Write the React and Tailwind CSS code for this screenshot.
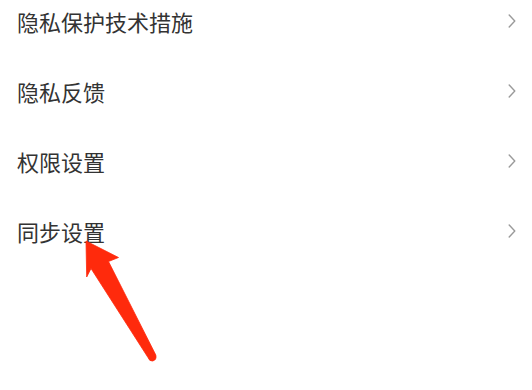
import React from 'react';

const items = ['隐私保护技术措施', '隐私反馈', '权限设置', '同步设置'];

function Chevron() {
  return (
    <svg width="8" height="14" viewBox="0 0 8 14" fill="none">
      <polyline points="1.2,1 6.8,7 1.2,13" stroke="#9a9a9a" strokeWidth="1.4" strokeLinecap="round" strokeLinejoin="round" />
    </svg>
  );
}

export default function App() {
  return (
    <div className="relative w-[532px] h-[390px] overflow-hidden bg-white" style={{ fontFamily: '"Noto Sans CJK SC", "Noto Sans", sans-serif' }}>
      <div className="-mt-[14px]">
        {items.map((t) => (
          <div key={t} className="flex h-[70px] items-center justify-between pl-[17px] pr-[16px]">
            <span className="text-[22px] text-[#333333]">{t}</span>
            <Chevron />
          </div>
        ))}
      </div>

      {/* annotation arrow */}
      <svg className="absolute left-0 top-0 pointer-events-none" width="532" height="390" viewBox="0 0 532 390">
        <path
          d="M86 241 L118.5 257.5 L108.5 261.5 L155.8 355 Q157 360 152.5 361 Q149.5 361.5 148 357.5 L91 268.5 L86.7 277 Z"
          fill="#ff2a0c"
          stroke="#ff2a0c"
          strokeWidth="0.8"
          strokeLinejoin="round"
        />
      </svg>
    </div>
  );
}
